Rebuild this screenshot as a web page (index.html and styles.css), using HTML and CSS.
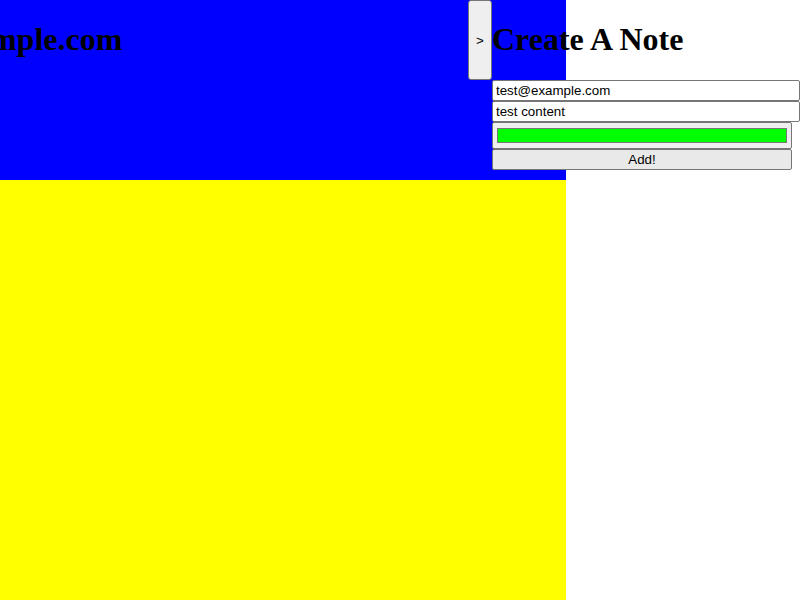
FILE: index.html
```html
<!DOCTYPE html>
<html>
<head>
<meta charset="utf-8">
<link rel="stylesheet" href="styles.css">
</head>
<body>
<div class="app">
  <main class="board">
    <header class="board-head">
      <h1 class="user">test@example.com</h1>
    </header>
    <section class="board-body"></section>
  </main>
  <aside class="sidebar">
    <button class="toggle">&gt;</button>
    <div class="form-wrap">
      <h1 class="title">Create A Note</h1>
      <form class="note-form">
        <input class="field" type="text" value="test@example.com">
        <input class="field" type="text" value="test content">
        <input class="color" type="color" value="#00ff00">
        <button class="add" type="button">Add!</button>
      </form>
    </div>
  </aside>
</div>
</body>
</html>
```
FILE: styles.css
```css
html, body {
  margin: 0;
  padding: 0;
  background: #fff;
}
body {
  font-family: "Liberation Serif", "Times New Roman", serif;
  overflow: hidden;
}
.app {
  position: relative;
  width: 800px;
  height: 600px;
}
.board {
  width: 566px;
  height: 600px;
  display: flex;
  flex-direction: column;
  overflow: hidden;
}
.board-head {
  background: #0000ff;
  height: 180px;
  overflow: hidden;
}
.board-body {
  background: #ffff00;
  flex: 1;
}
.user {
  font-size: 32px;
  font-weight: bold;
  margin: 21.44px 0;
  white-space: nowrap;
  text-indent: -134px;
}
.sidebar {
  position: absolute;
  top: 0;
  left: 468px;
  display: flex;
  align-items: flex-start;
}
.toggle {
  width: 24px;
  height: 80px;
  padding: 0;
  font-family: "Liberation Sans", Arial, sans-serif;
  font-size: 13.33px;
  color: #000;
  background: #efefef;
  border: 1px solid #767676;
  border-radius: 3px;
  box-sizing: border-box;
}
.form-wrap {
  width: 300px;
}
.title {
  font-size: 32px;
  font-weight: bold;
  margin: 21.44px 0;
  white-space: nowrap;
}
.note-form {
  display: flex;
  flex-direction: column;
  align-items: flex-start;
}
.field {
  width: 300px;
  font-family: "Liberation Sans", Arial, sans-serif;
  font-size: 13.33px;
  padding: 1px 2px;
  border: 2px solid #767676;
  border-width: 1px;
  margin: 0;
  height: 17px;
  padding: 1px 3px;
  box-sizing: content-box;
  border-radius: 2px;
  color: #000;
  background: #fff;
}
.color {
  width: 300px;
  height: 27px;
  margin: 0;
  padding: 1px 2px;
  box-sizing: border-box;
  border: 1px solid #767676;
  border-radius: 2px;
  background: #efefef;
}
.add {
  width: 300px;
  height: 21px;
  margin: 0;
  padding: 1px 6px;
  box-sizing: border-box;
  font-family: "Liberation Sans", Arial, sans-serif;
  font-size: 13.33px;
  color: #000;
  background: #e9e9e9;
  border: 1px solid #767676;
  border-radius: 2px;
}
```
